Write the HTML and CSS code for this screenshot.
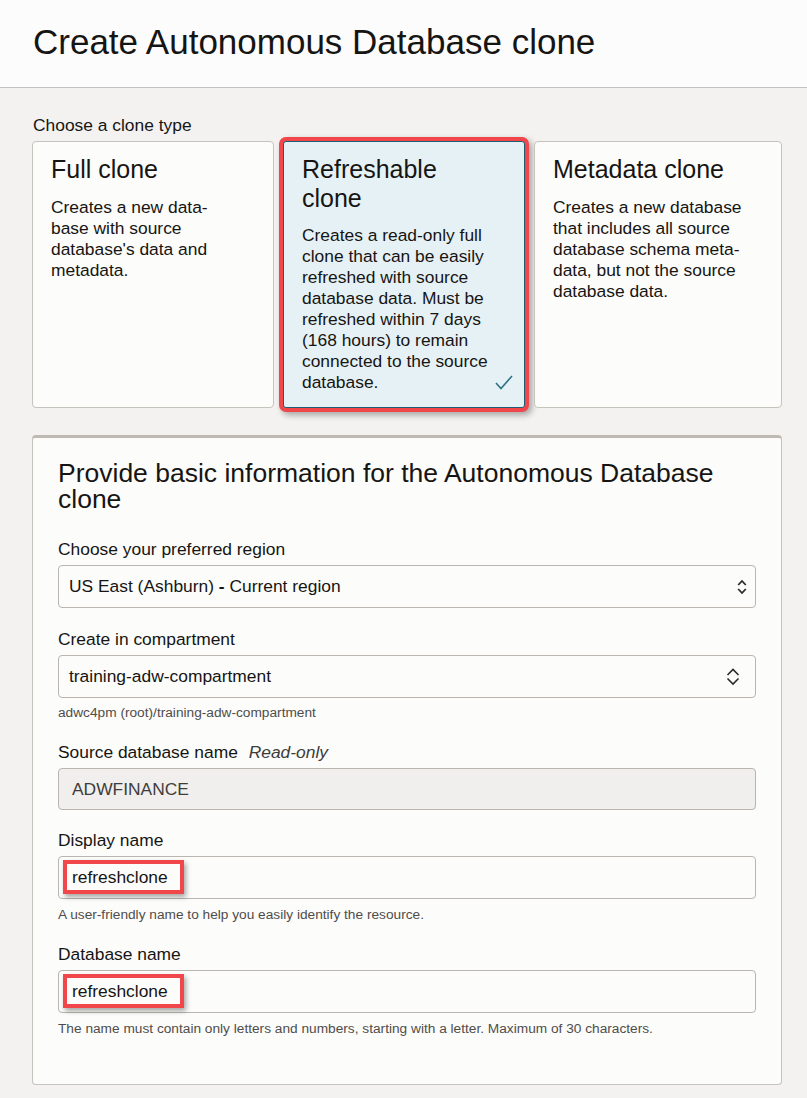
FILE: index.html
```html
<!DOCTYPE html>
<html lang="en">
<head>
<meta charset="utf-8">
<title>Create Autonomous Database clone</title>
<link rel="stylesheet" href="styles.css">
</head>
<body>
<header class="page-header">
  <h1 class="page-title">Create Autonomous Database clone</h1>
</header>
<main class="content">
  <div class="section-label">Choose a clone type</div>
  <div class="clone-types">
    <div class="clone-card">
      <div class="card-title">Full clone</div>
      <div class="card-desc">Creates a new data-<br>base with source<br>database's data and<br>metadata.</div>
    </div>
    <div class="clone-card selected">
      <div class="card-title">Refreshable<br>clone</div>
      <div class="card-desc">Creates a read-only full<br>clone that can be easily<br>refreshed with source<br>database data. Must be<br>refreshed within 7 days<br>(168 hours) to remain<br>connected to the source<br>database.</div>
      <svg class="check" width="18" height="15" viewBox="0 0 18 15"><path d="M1 8 L6 13.5 L17 1" fill="none" stroke="#2f7187" stroke-width="1.6"/></svg>
    </div>
    <div class="clone-card">
      <div class="card-title">Metadata clone</div>
      <div class="card-desc">Creates a new database<br>that includes all source<br>database schema meta-<br>data, but not the source<br>database data.</div>
    </div>
  </div>

  <section class="panel">
    <h2 class="panel-title">Provide basic information for the Autonomous Database<br>clone</h2>

    <div class="field first">
      <div class="field-label">Choose your preferred region</div>
      <div class="input select">
        <span class="value">US East (Ashburn) <b>-</b> Current region</span>
        <svg class="chev small" width="10" height="16" viewBox="0 0 10 16"><path d="M1.2 6 L5 2 L8.8 6 M1.2 10 L5 14 L8.8 10" fill="none" stroke="#2b2b2b" stroke-width="1.8"/></svg>
      </div>
    </div>

    <div class="field">
      <div class="field-label">Create in compartment</div>
      <div class="input select">
        <span class="value">training-adw-compartment</span>
        <svg class="chev large" width="14" height="19" viewBox="0 0 14 19"><path d="M1.5 8 L7 2.5 L12.5 8 M1.5 11.5 L7 17 L12.5 11.5" fill="none" stroke="#2b2b2b" stroke-width="1.6"/></svg>
      </div>
      <div class="help tight">adwc4pm (root)/training-adw-compartment</div>
    </div>

    <div class="field snug">
      <div class="field-label">Source database name <span class="readonly-tag">Read-only</span></div>
      <div class="input disabled"><span class="value muted">ADWFINANCE</span></div>
    </div>

    <div class="field snug">
      <div class="field-label">Display name</div>
      <div class="input"><span class="value marked">refreshclone</span></div>
      <div class="help">A user-friendly name to help you easily identify the resource.</div>
    </div>

    <div class="field snug">
      <div class="field-label">Database name</div>
      <div class="input"><span class="value marked">refreshclone</span></div>
      <div class="help">The name must contain only letters and numbers, starting with a letter. Maximum of 30 characters.</div>
    </div>
  </section>
</main>
</body>
</html>
```

FILE: styles.css
```css
* { box-sizing: border-box; }

html, body {
  margin: 0;
  padding: 0;
}

body {
  background: #f3f2f1;
  font-family: "Liberation Sans", Arial, sans-serif;
  color: #161513;
  font-size: 17.4px;
  line-height: 21px;
}

.page-header {
  background: #fcfcfc;
  height: 88px;
  border-bottom: 1px solid #c4c2c0;
  padding: 21px 33px 0;
}

.page-title {
  margin: 0;
  font-weight: normal;
  font-size: 35px;
  line-height: 41px;
  color: #161513;
}

.content {
  padding: 27px 25px 0 32px;
}

.section-label {
  padding-left: 1px;
  margin-bottom: 5px;
}

.clone-types {
  display: grid;
  grid-template-columns: 242px 242px 248px;
  column-gap: 9px;
  height: 267px;
}

.clone-card {
  position: relative;
  background: #fcfcfb;
  border: 1px solid #c6c2bc;
  border-radius: 4px;
  padding: 13px 10px 0 18px;
  white-space: nowrap;
}

.clone-card.selected {
  background: #e6f1f5;
  border-color: #1f5d75;
  box-shadow: 0 0 0 4px #f2474a, 3px 3px 6px 4px rgba(0, 0, 0, 0.32);
  border-radius: 3px;
}

.card-title {
  font-size: 25px;
  line-height: 28.5px;
}

.card-desc {
  margin-top: 13px;
  font-size: 17.4px;
  line-height: 21px;
}

.check {
  position: absolute;
  right: 11px;
  bottom: 17px;
}

.panel {
  margin-top: 27px;
  background: #fcfcfa;
  border: 1px solid #c6c2bc;
  border-top: 3px solid #bdb9b3;
  border-radius: 4px;
  padding: 22px 25px 43px 25px;
  height: 650px;
}

.panel-title {
  margin: 0;
  font-weight: normal;
  font-size: 26.5px;
  line-height: 26px;
  color: #161513;
}

.field {
  margin-top: 21px;
}

.field.snug {
  margin-top: 20px;
}

.field.first {
  margin-top: 27px;
}

.field-label {
  margin-bottom: 5px;
}

.readonly-tag {
  font-style: italic;
  color: #3d3c3a;
  margin-left: 6px;
}

.input {
  height: 43px;
  border: 1px solid #bab5ae;
  border-radius: 4px;
  background: #fcfcfb;
  padding: 0 10px;
  display: flex;
  align-items: center;
  justify-content: space-between;
}

.input.disabled {
  background: #f0efed;
  height: 42px;
  padding-left: 13px;
}

.value {
  white-space: nowrap;
}

.value b {
  font-weight: bold;
}

.value.muted {
  color: #3e3d3b;
}

.value.marked {
  display: inline-block;
  border: 4px solid #f2474a;
  padding: 3px 12px 2px 5px;
  margin: -7px -16px -6px -6px;
  box-shadow: 2px 3px 5px rgba(0, 0, 0, 0.35);
  line-height: 21px;
}

.input .value.marked {
  margin-left: -6px;
}

.chev.small {
  margin-right: -2px;
}

.chev.large {
  margin-right: 5px;
}

.help {
  margin-top: 7px;
  font-size: 13.7px;
  line-height: 18px;
  color: #4f4d4b;
}

.help.tight {
  margin-top: 6px;
}
```
